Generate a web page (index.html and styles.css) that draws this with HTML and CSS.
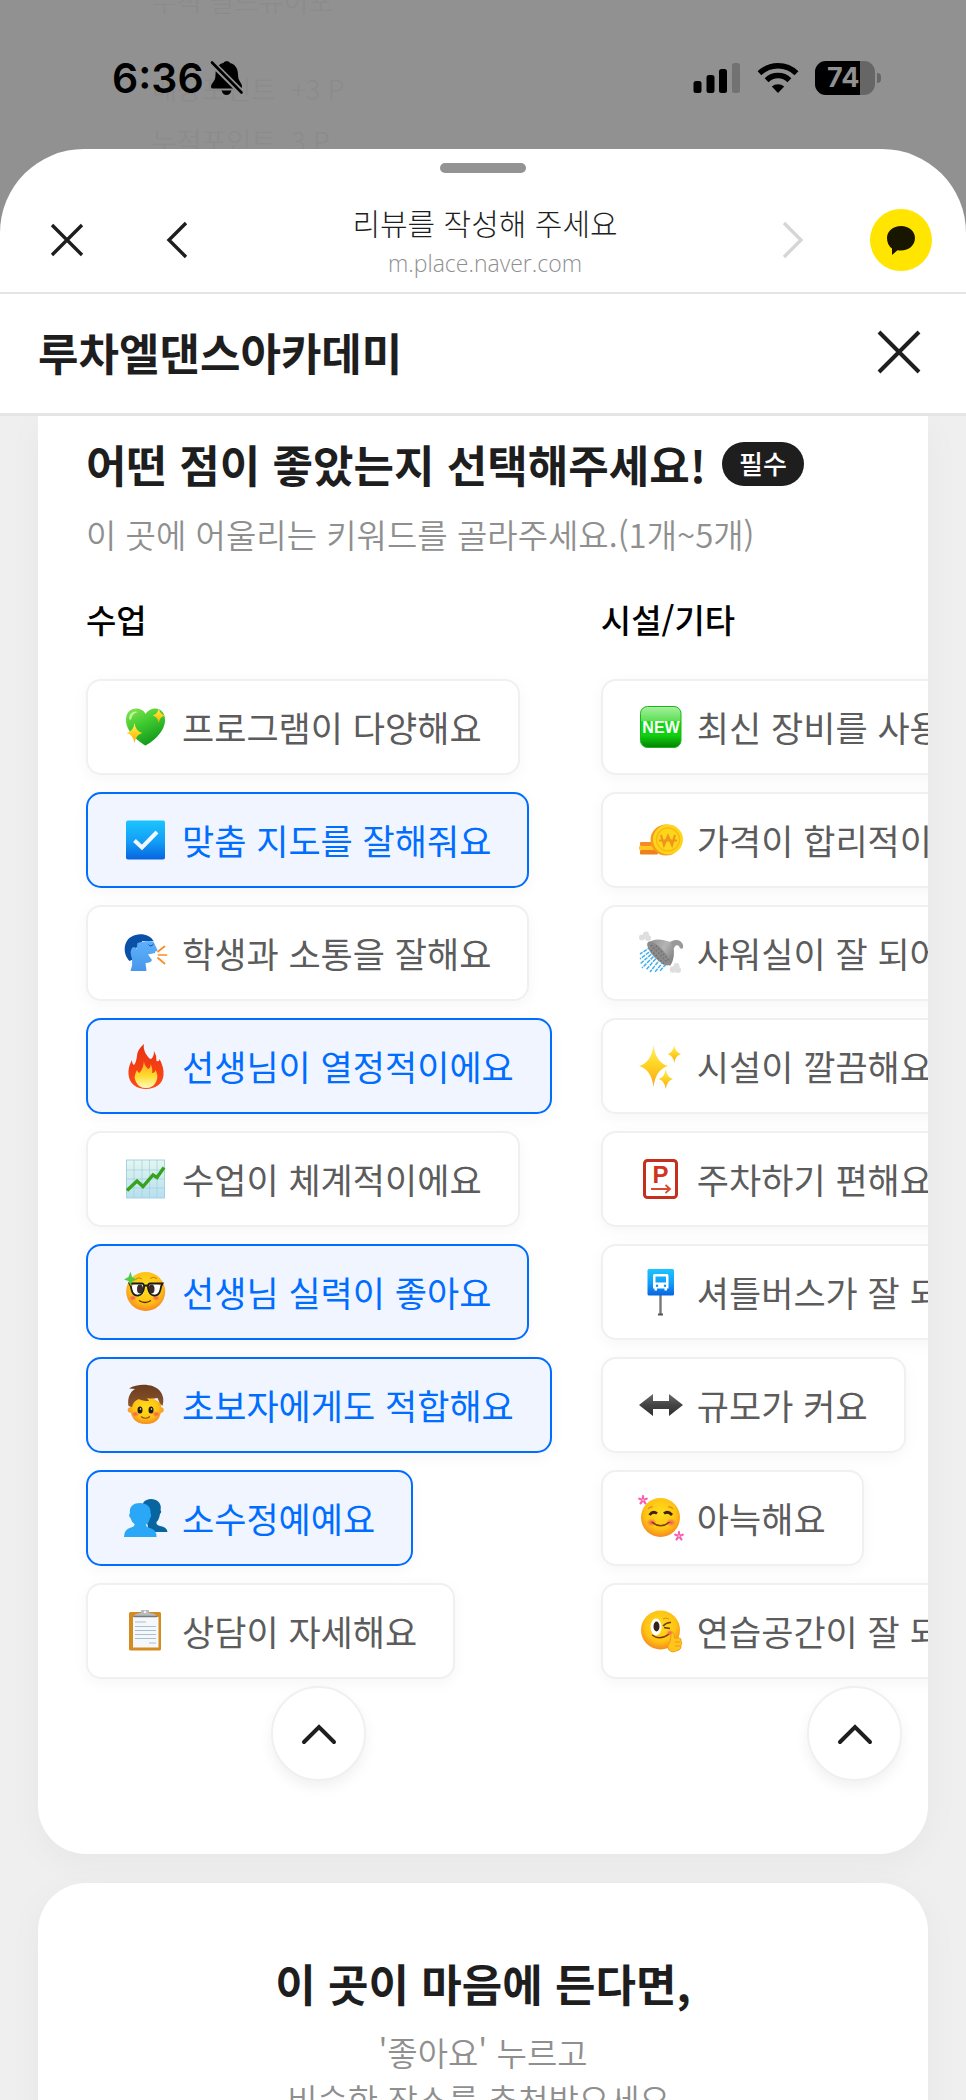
FILE: index.html
```html
<!DOCTYPE html>
<html lang="ko">
<head>
<meta charset="utf-8">
<meta name="viewport" content="width=device-width, initial-scale=1">
<title>리뷰를 작성해 주세요</title>
<link rel="stylesheet" href="styles.css">
</head>
<body>
<svg class="defs" width="0" height="0" aria-hidden="true">
  <defs>
    <linearGradient id="green" x1="0" y1="0" x2="0.5" y2="1"><stop offset="0" stop-color="#8be552"/><stop offset="0.5" stop-color="#3fca2f"/><stop offset="1" stop-color="#149a1c"/></linearGradient>
    <linearGradient id="gold" x1="0" y1="0" x2="0" y2="1"><stop offset="0" stop-color="#fff06a"/><stop offset="0.5" stop-color="#ffd21f"/><stop offset="1" stop-color="#f5a51d"/></linearGradient>
    <linearGradient id="sky" x1="0" y1="0" x2="0" y2="1"><stop offset="0" stop-color="#1cc4ff"/><stop offset="0.55" stop-color="#129df6"/><stop offset="1" stop-color="#0764e0"/></linearGradient>
    <linearGradient id="skin" x1="0" y1="0" x2="0" y2="1"><stop offset="0" stop-color="#5fb0fb"/><stop offset="1" stop-color="#4798ea"/></linearGradient>
    <linearGradient id="flame" x1="0" y1="0" x2="0" y2="1"><stop offset="0" stop-color="#e8320f"/><stop offset="1" stop-color="#ff4a1a"/></linearGradient>
    <linearGradient id="flameIn" x1="0" y1="0" x2="0" y2="1"><stop offset="0" stop-color="#ff9a1a"/><stop offset="0.6" stop-color="#ffdc2e"/><stop offset="1" stop-color="#fffbc0"/></linearGradient>
    <linearGradient id="paper" x1="0" y1="0" x2="0" y2="1"><stop offset="0" stop-color="#e4f6f0"/><stop offset="1" stop-color="#b7dfee"/></linearGradient>
    <radialGradient id="face" cx="0.5" cy="0.4" r="0.6"><stop offset="0" stop-color="#ffdd1f"/><stop offset="0.65" stop-color="#ffc413"/><stop offset="1" stop-color="#f58a1f"/></radialGradient>
    <linearGradient id="newBg" x1="0" y1="0" x2="0" y2="1"><stop offset="0" stop-color="#a8f0a0"/><stop offset="0.34" stop-color="#5fe057"/><stop offset="0.37" stop-color="#12d812"/><stop offset="0.7" stop-color="#10d010"/><stop offset="1" stop-color="#058005"/></linearGradient>
    <linearGradient id="metal" x1="0" y1="0" x2="1" y2="0.6"><stop offset="0" stop-color="#8d8d8d"/><stop offset="0.6" stop-color="#b5b5b5"/><stop offset="1" stop-color="#858585"/></linearGradient>
    <linearGradient id="dark" x1="0" y1="0" x2="0" y2="1"><stop offset="0" stop-color="#6a6a6a"/><stop offset="0.5" stop-color="#444"/><stop offset="1" stop-color="#2e2e2e"/></linearGradient>
    <linearGradient id="hair" x1="0" y1="0" x2="0" y2="1"><stop offset="0" stop-color="#6b3d1e"/><stop offset="1" stop-color="#8b5430"/></linearGradient>
    <radialGradient id="blush"><stop offset="0" stop-color="#f2436b" stop-opacity="0.9"/><stop offset="1" stop-color="#f2436b" stop-opacity="0"/></radialGradient>
    <symbol id="spark" viewBox="0 0 20 30" preserveAspectRatio="none"><path d="M10 0Q11.500 12.500 20 15Q11.500 17.500 10 30Q8.500 17.500 0 15Q8.500 12.500 10 0Z"/></symbol>
    <symbol id="flower" viewBox="0 0 10 10"><g stroke="#fb5fae" stroke-width="2.200" stroke-linecap="round"><path d="M5 5V1.200M5 5L8.700 3.700M5 5L7.400 8.400M5 5L2.600 8.400M5 5L1.300 3.700"/></g><circle cx="5" cy="5" r="1" fill="#fdb3d6"/></symbol>
  </defs>
</svg>

<div class="screen">
  <div class="status">
    <div class="ghost" aria-hidden="true">
      <p>누적 필드뉴이포</p>
      <p>매장포인트 &nbsp;+3 P</p>
      <p>누적포인트 &nbsp;3 P</p>
    </div>
    <div class="clock">
      <time>6:36</time>
      <svg width="34" height="36" viewBox="0 0 34 36" aria-label="무음">
        <path d="M1 27C1 22 5.500 23 5.500 14.500C5.500 7 9.500 3.600 13.500 3C14 .7 19.500 .7 20 3C24.500 4 28 8 28 14.500C28 22 32 22.500 32 26.500Q32 28.500 30 28.500H3Q1 28.500 1 27Z"/>
        <path d="M11.500 30.500H21.500Q20 35 16.500 35T11.500 30.500Z"/>
        <path d="M1.500 2.500L32 33" stroke="#919191" stroke-width="6.500"/>
        <path d="M2 2.500L31.500 32.500" stroke="#000" stroke-width="2.600" stroke-linecap="round"/>
      </svg>
    </div>
    <div class="indicators">
      <svg width="48" height="32" viewBox="0 0 48 32" aria-label="신호">
        <rect x="0.500" y="19" width="8" height="12" rx="2.500"/><rect x="13.500" y="13" width="8" height="18" rx="2.500"/><rect x="26" y="7" width="8" height="24" rx="2.500"/><rect x="39" y="1" width="8" height="30" rx="2.500" fill="#727272"/>
      </svg>
      <svg width="42" height="32" viewBox="0 0 42 32" aria-label="와이파이">
        <g fill="none" stroke="#000" stroke-width="5.500"><path d="M2.500 11.200A26.500 26.500 0 0 1 39.500 11.200"/><path d="M9.600 18.300A16.200 16.200 0 0 1 32.400 18.300"/></g>
        <path d="M21 31L14.800 24.600A9.500 9.500 0 0 1 27.200 24.600Z"/>
      </svg>
      <div class="battery"><span class="battery-body"><span class="battery-level">74</span></span><span class="battery-cap"></span></div>
    </div>
  </div>

  <main class="sheet">
    <div class="handle"></div>
    <header class="browser-bar">
      <button class="icon-btn" type="button" aria-label="닫기"><svg width="34" height="34" viewBox="0 0 34 34"><path d="M2 2L32 32M32 2L2 32" fill="none" stroke="#1e1e1e" stroke-width="3.400"/></svg></button>
      <button class="icon-btn back" type="button" aria-label="뒤로"><svg width="22" height="38" viewBox="0 0 22 38"><path d="M20 2L3 19L20 36" fill="none" stroke="#1e1e1e" stroke-width="3.400"/></svg></button>
      <div class="page-id">
        <p class="page-title">리뷰를 작성해 주세요</p>
        <p class="page-url">m.place.naver.com</p>
      </div>
      <button class="icon-btn forward" type="button" aria-label="앞으로" disabled><svg width="22" height="38" viewBox="0 0 22 38"><path d="M2 2L19 19L2 36" fill="none" stroke="#d6d6d6" stroke-width="3.400"/></svg></button>
      <button class="talk" type="button" aria-label="공유"><svg width="30" height="30" viewBox="0 0 30 30"><path d="M15 1C23 1 29 6 29 13S23 25.500 15 25.500Q13 25.500 11.500 25.200L6 30V23.500Q1 20 1 13C1 6 7 1 15 1Z" fill="#191600"/></svg></button>
    </header>
    <header class="place-bar">
      <h1>루차엘댄스아카데미</h1>
      <button class="icon-btn" type="button" aria-label="리뷰 닫기"><svg width="44" height="44" viewBox="0 0 44 44"><path d="M2 2L42 42M42 2L2 42" fill="none" stroke="#1e1e1e" stroke-width="4"/></svg></button>
    </header>

    <div class="content">
      <section class="card keywords">
        <div class="question"><h2>어떤 점이 좋았는지 선택해주세요!</h2><span class="badge">필수</span></div>
        <p class="hint">이 곳에 어울리는 키워드를 골라주세요.(1개~5개)</p>
        <div class="columns">
          <div class="column">
            <h3>수업</h3>
            <button class="chip" type="button" aria-pressed="false"><svg viewBox="0 0 44 44"><path d="M21.500 40.500C17 38 2 28 2 15C2 7 7 3.500 12 3.500C17 3.500 20.500 6 21.500 9C23 6 27 3.500 31 3.500C37 3.500 41 8 41 15C41 28 26 38.500 21.500 40.500Z" fill="url(#green)"/><path d="M5 14C5 8 10 5 14 7C10 8 8 10 7 15Z" fill="#d8fbb4" opacity=".8"/><use href="#spark" x="2.500" y="18" width="16" height="20" fill="url(#gold)"/><use href="#spark" x="28.500" y="3" width="12.500" height="15" fill="url(#gold)"/></svg>프로그램이 다양해요</button>
            <button class="chip" type="button" aria-pressed="true"><svg viewBox="0 0 44 44"><rect x="2" y="2.500" width="39" height="39" rx="2" fill="url(#sky)"/><path d="M10.500 22.500L18 29.500L33 14" fill="none" stroke="#f3f8ff" stroke-width="4"/></svg>맞춤 지도를 잘해줘요</button>
            <button class="chip" type="button" aria-pressed="false"><svg viewBox="0 0 44 44"><path d="M5.500 30C-2 22 0 10 7 6C15 1 26 3.500 29.500 10H18V14L12 17V27Z" fill="#0a4fa8"/><path d="M13.500 12Q22 9 29.500 10.500Q31 14 33.500 19Q32.500 21 31 20.500L31 22L24 23.500L28 29Q27 32 21.500 32L22.500 40H6.500Q9 34 8 28Q5 19 9 16Q12 16 12.500 18Z" fill="url(#skin)"/><path d="M24.500 13.500Q26.500 16.500 29.500 13" fill="none" stroke="#0a4fa8" stroke-width="1"/><g stroke="#fb8c1c" stroke-width="1.700" stroke-linecap="round"><path d="M34 20.500L40.500 15.500M34.500 24H42.500M34 27L40.500 32.500"/></g></svg>학생과 소통을 잘해요</button>
            <button class="chip" type="button" aria-pressed="true"><svg viewBox="0 0 44 44"><path d="M20 0Q19 5 22 10T27 15Q30 13 30 7Q33 12 32.500 17Q35.500 18 35.500 15Q40 23 39.500 31C39 40 31 45 22 45S5 40 4.500 30Q4 23 8 16Q8 20 10 21Q12 19 13 12Q13 6 20 0Z" fill="url(#flame)"/><path d="M20 14Q19 20 24 25Q27 24 26.500 20Q29 24 28 29Q31 29 31.500 26Q35 32 32 38Q29 44 22 44T12 38Q9 33 13 26Q14 29 15.500 29Q20 24 20 14Z" fill="url(#flameIn)"/></svg>선생님이 열정적이에요</button>
            <button class="chip" type="button" aria-pressed="false"><svg viewBox="0 0 44 44"><rect x="2.500" y="3" width="38" height="38" fill="url(#paper)" stroke="#a4d3df"/><path d="M3 13H40M3 22H40M3 31H40M10 3V41M18 3V41M25.500 3V41M33 3V41" stroke="#9fd0df" stroke-width=".7"/><path d="M3 33.500L13 24L19 29.500L29 18L33 20.500L40 10.500" fill="none" stroke="#37a31c" stroke-width="3.400"/></svg>수업이 체계적이에요</button>
            <button class="chip" type="button" aria-pressed="true"><svg viewBox="0 0 44 44"><circle cx="21.700" cy="21.500" r="19.500" fill="url(#face)"/><ellipse cx="9" cy="28" rx="4" ry="3" fill="url(#blush)"/><ellipse cx="32" cy="28" rx="4" ry="3" fill="url(#blush)"/><rect x="8" y="14" width="12" height="11" rx="4" fill="#fff"/><rect x="24.500" y="14" width="12" height="11" rx="4" fill="#fff"/><ellipse cx="16" cy="19" rx="3" ry="4.500" fill="#3a2d25"/><ellipse cx="27.500" cy="19" rx="3" ry="4.500" fill="#3a2d25"/><g fill="none" stroke="#1b1b1b" stroke-width="1.800"><path d="M5.500 13.500H18.500Q20.500 14 20 18Q19 25 14 25.500T7.500 19.500Q7 16 5.500 13.500Z"/><path d="M38.500 13.500H26Q23.500 14 24 18Q25 25 30 25.500T36.500 19.500Q37 16 38.500 13.500ZM20 16Q22 15 24 16"/></g><path d="M15 30.500Q21 34.500 27 30.500" fill="none" stroke="#542b0b" stroke-width="1.300"/><path d="M12 9Q15 6.500 18 9M26 8.500Q29 6 33 8.500" fill="none" stroke="#d77912" stroke-width="1"/><path d="M6.500 1.500L8 7L13 9.500L8 11.500L6.500 16L4.500 11L0 9.500L4.500 7Z" fill="#54c943"/></svg>선생님 실력이 좋아요</button>
            <button class="chip" type="button" aria-pressed="true"><svg viewBox="0 0 44 44"><circle cx="6.500" cy="27" r="2.800" fill="#f7a52a"/><circle cx="37" cy="27" r="2.800" fill="#f7a52a"/><path d="M6.500 21Q22 7 37 21Q39 41 22 41T6.500 21Z" fill="url(#face)"/><path d="M4.500 23C3 14 7 8 11 6L5 5.500C14 0 30 .5 36 8Q41 14 38.500 23Q35 20 33.500 15Q27 16 23 15L25 18Q18 18 15 16Q9 18 8 24Z" fill="url(#hair)"/><ellipse cx="11.500" cy="31" rx="4" ry="3" fill="url(#blush)"/><ellipse cx="32" cy="31" rx="4" ry="3" fill="url(#blush)"/><ellipse cx="16" cy="27" rx="2.500" ry="3.500" fill="#221914"/><ellipse cx="27" cy="27" rx="2.500" ry="3.500" fill="#221914"/><circle cx="16.500" cy="26" r=".8" fill="#fff"/><circle cx="27.500" cy="26" r=".8" fill="#fff"/><path d="M17 33.500Q21.500 37 26 33.500" fill="none" stroke="#9a4a16" stroke-width="1.200"/></svg>초보자에게도 적합해요</button>
            <button class="chip" type="button" aria-pressed="true"><svg viewBox="0 0 44 44"><path d="M19 7C21 4 24 3 27 3C34 3 38 8 36.500 14Q38 16 36 18Q35 24 32.500 26Q32 29 36 30Q43 31 43.500 36H25Z" fill="#08659f"/><path d="M16 7C23 7 27 11 26.500 17Q28 20 26 22Q25 27 22 28.500Q22 31 26 32Q32.500 33.500 32.500 41H0Q0 33 7 31.500Q11 30.500 10.500 28Q7.500 26 6.500 22Q4 20 6 17C5 11 9 7 16 7Z" fill="#2ba7f7"/></svg>소수정예예요</button>
            <button class="chip" type="button" aria-pressed="false"><svg viewBox="0 0 44 44"><rect x="5" y="3" width="32" height="38.500" rx="1.500" fill="#d48c20"/><rect x="9" y="8" width="25.500" height="30.500" fill="#f4f8fb"/><path d="M11 13H22M11 17.500H32M11 21.500H32M11 25.500H32M11 29.500H32M25 34H32" stroke="#a9bfd0" stroke-width="1"/><path d="M9.500 8Q10 4.500 17 4V1H25V4Q33 4.500 33 8Z" fill="#b7bcc1"/><path d="M9.500 7.500H33" stroke="#74797e" stroke-width="1.500"/><circle cx="21" cy="3" r="1.200" fill="#f5f5f5"/></svg>상담이 자세해요</button>
            <button class="more" type="button" aria-label="수업 접기"><svg width="36" height="22" viewBox="0 0 36 22"><path d="M3 19L18 4L33 19" fill="none" stroke="#1e1e1e" stroke-width="4" stroke-linecap="round"/></svg></button>
          </div>
          <div class="column">
            <h3>시설/기타</h3>
            <button class="chip" type="button" aria-pressed="false"><svg viewBox="0 0 44 44"><rect x="1.500" y="1.500" width="40.500" height="41" rx="7" fill="url(#newBg)" stroke="#16b816"/><text class="new-text" x="22" y="27.500" text-anchor="middle">NEW</text></svg>최신 장비를 사용해요</button>
            <button class="chip" type="button" aria-pressed="false"><svg viewBox="0 0 44 44"><rect x="1" y="24" width="18" height="4" rx="1" fill="#f58a26"/><rect x="0" y="28" width="18" height="4" rx="1" fill="#ffc81e"/><rect x="1" y="32" width="18" height="4.500" rx="1" fill="#f0801f"/><circle cx="27" cy="22" r="15.500" fill="#f59a1b"/><circle cx="29" cy="21.500" r="15" fill="#ffd51c"/><circle cx="29" cy="21.500" r="11.500" fill="none" stroke="#f8bb12" stroke-width="1.500"/><path d="M22 17L25 27L29 18L33 27L36 17M20 22.500H38" fill="none" stroke="#ee951b" stroke-width="2.200"/></svg>가격이 합리적이에요</button>
            <button class="chip" type="button" aria-pressed="false"><svg viewBox="0 0 44 44"><g stroke="#3fb0f0" stroke-width="1.500" stroke-dasharray="4 1"><path d="M12 16L1 23M14 18L1 28M16 20L1 33M18 22L3 37M20 24L7 39M22 27L11 41M25 30L16 41M27 33L21 40"/></g><g fill="#dedede"><circle cx="3" cy="6.500" r="3"/><circle cx="7" cy="3.500" r="3"/><circle cx="9" cy="7" r="3"/><circle cx="34" cy="38.500" r="3.200"/><circle cx="37.500" cy="35" r="3"/><circle cx="39" cy="39" r="3"/></g><path d="M28 13Q36 7 41 10Q45 13 44 17Q41 19 40 15Q36 12 34 20Z" fill="#999"/><path d="M9 12Q15 7 24 9L32 11L35 20Q35 30 31 35Z" fill="url(#metal)"/><ellipse cx="19.500" cy="22.500" rx="15.500" ry="5.500" transform="rotate(47 19.500 22.500)" fill="#8b8b8b"/><path d="M12 14L28 31M12 19L25 33M17 15L30 29" stroke="#707070" stroke-dasharray="1.500 2" stroke-width="1.500"/></svg>샤워실이 잘 되어있어요</button>
            <button class="chip" type="button" aria-pressed="false"><svg viewBox="0 0 44 44"><g fill="url(#gold)"><use href="#spark" x="0" y="1" width="29" height="42"/><use href="#spark" x="28.500" y="1" width="13.500" height="18"/><use href="#spark" x="19.500" y="25" width="14.500" height="20"/></g></svg>시설이 깔끔해요</button>
            <button class="chip" type="button" aria-pressed="false"><svg viewBox="0 0 44 44"><rect x="5.500" y="3.500" width="32" height="37" rx="3" fill="#fff" stroke="#c5301e" stroke-width="3"/><text class="parking-text" x="21.500" y="26" text-anchor="middle">P</text><path d="M12 32H31M26.500 28L31 32L26.500 36" fill="none" stroke="#d84a2c" stroke-width="1.800"/></svg>주차하기 편해요</button>
            <button class="chip" type="button" aria-pressed="false"><svg viewBox="0 0 44 44"><path d="M21.500 25V44" stroke="#777" stroke-width="2.400"/><path d="M19 44.500H24" stroke="#555" stroke-width="2"/><rect x="8.500" y="-1" width="26.500" height="26.500" rx="1.500" fill="url(#sky)"/><path d="M15.500 4H28Q29.500 4 29.500 6V18.500H28V20.500H25.500V18.500H18V20.500H15.500V18.500H14V6Q14 4 15.500 4ZM16.500 6.500V12.500H27V6.500ZM18 14.500A1.200 1.200 0 1 0 18 17A1.200 1.200 0 0 0 18 14.500ZM26 14.500A1.200 1.200 0 1 0 26 17A1.200 1.200 0 0 0 26 14.500Z" fill="#fff" fill-rule="evenodd"/></svg>셔틀버스가 잘 되어있어요</button>
            <button class="chip" type="button" aria-pressed="false"><svg viewBox="0 0 44 44"><path d="M0 22L14 11V18H30V11L44 22L30 33V26H14V33Z" fill="url(#dark)"/></svg>규모가 커요</button>
            <button class="chip" type="button" aria-pressed="false"><svg viewBox="0 0 44 44"><circle cx="21.500" cy="21.500" r="19.500" fill="url(#face)"/><ellipse cx="12.500" cy="26.500" rx="5" ry="4" fill="url(#blush)"/><ellipse cx="32" cy="26.500" rx="5" ry="4" fill="url(#blush)"/><path d="M10.500 19Q14 14.500 18 17.500M25 17.500Q29 14.500 33 19" fill="none" stroke="#3b2414" stroke-width="2.800"/><path d="M13 26Q21.500 33.500 30.500 26" fill="none" stroke="#7a3a0c" stroke-width="1.500"/><path d="M9 13Q11 10.500 14 11M29 11Q32 10.500 34 13" fill="none" stroke="#dd8a18" stroke-width="1.200"/><use href="#flower" x="-1" y="-1" width="10" height="10"/><use href="#flower" x="35" y="35" width="10" height="10"/></svg>아늑해요</button>
            <button class="chip" type="button" aria-pressed="false"><svg viewBox="0 0 44 44"><circle cx="21.500" cy="21" r="19.500" fill="url(#face)"/><ellipse cx="17" cy="18" rx="5.500" ry="8.500" fill="#fff"/><ellipse cx="17.500" cy="17.500" rx="3" ry="5" fill="#35231a"/><path d="M24 17Q28 13 32 13.500M25 18.500L31 19.500" fill="none" stroke="#6b3a10" stroke-width="1.500"/><path d="M24 10Q27 8 30 10" fill="none" stroke="#dd8a18"/><path d="M13 26Q21 32 30 25" fill="none" stroke="#7a3a0c" stroke-width="1.500"/><ellipse cx="31" cy="24" rx="4" ry="3" fill="url(#blush)"/><path d="M32 25Q35 21 35.500 29H40Q42.500 29 42 32Q43.500 34 42 36Q42.500 40 40 41L34 43Q28 42 29 36Q32 33 32 25Z" fill="#ffc51b" stroke="#ee951b" stroke-width=".9"/><path d="M36 33H41M36 37H41" stroke="#ee951b" stroke-width="1"/></svg>연습공간이 잘 되어있어요</button>
            <button class="more" type="button" aria-label="시설/기타 접기"><svg width="36" height="22" viewBox="0 0 36 22"><path d="M3 19L18 4L33 19" fill="none" stroke="#1e1e1e" stroke-width="4" stroke-linecap="round"/></svg></button>
          </div>
        </div>
      </section>
      <section class="card like">
        <h2>이 곳이 마음에 든다면,</h2>
        <p>'좋아요' 누르고<br>비슷한 장소를 추천받으세요.</p>
      </section>
    </div>
  </main>
</div>
</body>
</html>
```

FILE: styles.css
```css
* { box-sizing: border-box; margin: 0; padding: 0; }

body {
  background: #919191;
  color: #1e1e1e;
  font-family: "Noto Sans CJK KR", sans-serif;
}

button {
  border: 0;
  background: none;
  font: inherit;
  color: inherit;
}

svg { display: block; flex: none; overflow: visible; }
.defs { position: absolute; }

.screen {
  display: flex;
  flex-direction: column;
  height: 100vh;
  overflow: hidden;
}

/* Status bar */
.status {
  position: relative;
  display: flex;
  justify-content: space-between;
  flex: none;
  height: 149px;
  padding: 58px 85px 0 112px;
  overflow: hidden;
}

.ghost {
  position: absolute;
  top: -25px;
  left: 152px;
  color: #8b8b8b;
  font-size: 27px;
  font-weight: 300;
  line-height: 52px;
}
.ghost p:first-child { margin-bottom: 36px; }

.clock, .indicators {
  position: relative;
  display: flex;
  align-items: center;
  height: 40px;
}
.clock { gap: 6px; color: #000; }
.clock time { font: 600 41px/40px Inter, sans-serif; }
.indicators { gap: 16px; }

.battery { display: flex; align-items: center; gap: 2px; }
.battery-body {
  width: 60px;
  height: 34px;
  border-radius: 11px;
  background: #666;
  overflow: hidden;
}
.battery-level {
  display: block;
  width: 75%;
  height: 34px;
  padding-left: 12px;
  background: #000;
  color: #919191;
  font: 700 27px/34px Inter, sans-serif;
}
.battery-cap {
  width: 4px;
  height: 10px;
  border-radius: 0 5px 5px 0;
  background: #666;
}

/* Sheet */
.sheet {
  display: flex;
  flex-direction: column;
  flex: 1;
  min-height: 0;
  border-radius: 84px 84px 0 0;
  background: #fff;
  overflow: hidden;
}
.handle {
  flex: none;
  width: 86px;
  height: 10px;
  margin: 14px auto 0;
  border-radius: 5px;
  background: #939393;
}

.browser-bar {
  display: flex;
  align-items: center;
  flex: none;
  height: 121px;
  padding: 14px 34px 0 50px;
  border-bottom: 2px solid #e4e4e4;
}
.icon-btn { flex: none; }
.back { margin-left: 82px; }
.forward { margin-right: 66px; }
.talk {
  display: grid;
  place-items: center;
  flex: none;
  width: 62px;
  height: 62px;
  border-radius: 50%;
  background: #ffe500;
}
.page-id { flex: 1; padding-top: 4px; text-align: center; }
.page-title { font-size: 30px; font-weight: 300; line-height: 42px; }
.page-url { color: #8f8f8f; font: 300 23px/40px "Open Sans", sans-serif; }

.place-bar {
  display: flex;
  align-items: center;
  justify-content: space-between;
  flex: none;
  height: 122px;
  padding: 0 45px 3px 38px;
  border-bottom: 3px solid #e5e5e5;
}
h1, h2 { font-size: 44px; font-weight: 700; line-height: 60px; }

/* Cards */
.content {
  display: flex;
  flex-direction: column;
  gap: 29px;
  flex: 1;
  min-height: 0;
  padding: 0 38px;
  background: #efefef;
  overflow: hidden;
}
.card {
  flex: none;
  border-radius: 48px;
  background: #fff;
  box-shadow: 0 8px 36px rgba(0, 0, 0, 0.04);
}
.keywords {
  padding: 18px 0 73px 48px;
  border-radius: 0 0 48px 48px;
  overflow: hidden;
}
.question { display: flex; align-items: center; gap: 16px; }
.badge {
  height: 44px;
  padding: 0 17px;
  border-radius: 22px;
  background: #1e1e1e;
  color: #fff;
  font-size: 26px;
  font-weight: 500;
  line-height: 42px;
}
.hint {
  margin-top: 12px;
  color: #8f8f8f;
  font-size: 33px;
  font-weight: 350;
  line-height: 56px;
}
.columns { display: flex; gap: 49px; margin-top: 32px; }
.column {
  display: flex;
  flex-direction: column;
  align-items: flex-start;
  flex: none;
  gap: 17px;
}
h3 {
  margin-bottom: 18px;
  color: #000;
  font-size: 33px;
  font-weight: 500;
  line-height: 50px;
}

.chip {
  display: flex;
  align-items: center;
  gap: 14px;
  height: 96px;
  padding: 0 36px;
  border: 2px solid #f0f0f0;
  border-radius: 15px;
  background: #fff;
  box-shadow: 0 4px 16px rgba(0, 0, 0, 0.04);
  color: #5c5c5c;
  font-size: 35px;
  font-weight: 400;
  line-height: 50px;
  white-space: nowrap;
}
.chip svg { width: 44px; height: 44px; }
.chip[aria-pressed="true"] {
  border-color: #006dff;
  background: #f0f5ff;
  color: #006dff;
}
.new-text { fill: #fff; font: 700 16px "Liberation Sans", sans-serif; }
.parking-text { fill: #cf3421; font: 700 24px "Liberation Sans", sans-serif; }

.more {
  display: grid;
  place-items: center;
  align-self: center;
  width: 95px;
  height: 95px;
  margin-top: -10px;
  border: 2px solid #f0f0f0;
  border-radius: 50%;
  background: #fff;
  box-shadow: 0 6px 14px rgba(0, 0, 0, 0.06);
}

.like { padding: 70px 48px; text-align: center; }
.like p {
  margin-top: 16px;
  color: #8f8f8f;
  font-size: 33px;
  font-weight: 350;
  line-height: 47px;
}
```
